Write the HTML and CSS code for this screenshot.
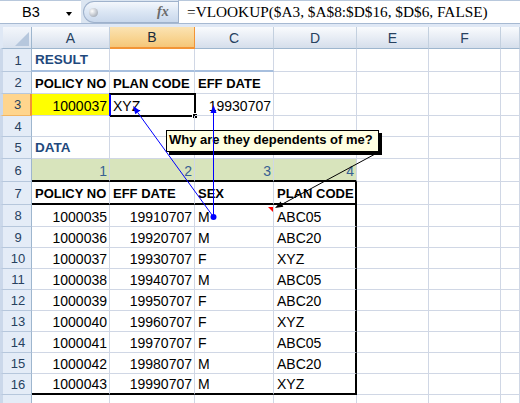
FILE: index.html
```html
<!DOCTYPE html>
<html>
<head>
<meta charset="utf-8">
<link rel="stylesheet" href="styles.css">
</head>
<body>
<div class="app">
  <div class="fbar">
    <div class="namebox"><span class="nb-text">B3</span><span class="dd"></span></div>
    <div class="pill"><span class="knob"></span><span class="fx">fx</span></div>
    <div class="formula">=VLOOKUP($A3, $A$8:$D$16, $D$6, FALSE)</div>
  </div>
  <div class="band"></div>
  <div class="sheet">
    <div class="corner"></div><div class="ch">A</div><div class="ch sel">B</div><div class="ch">C</div><div class="ch">D</div><div class="ch">E</div><div class="ch">F</div><div class="ch"></div>

    <div class="rh">1</div><div class="c h hb">RESULT</div><div class="c hb"></div><div class="c hb"></div><div class="c"></div><div class="c"></div><div class="c"></div><div class="c"></div>

    <div class="rh">2</div><div class="c b">POLICY NO</div><div class="c b">PLAN CODE</div><div class="c b">EFF DATE</div><div class="c"></div><div class="c"></div><div class="c"></div><div class="c"></div>

    <div class="rh sel">3</div><div class="c r y">1000037</div><div class="c active">XYZ<span class="selbox"><span class="handle"></span></span></div><div class="c r">19930707</div><div class="c"></div><div class="c"></div><div class="c"></div><div class="c"></div>

    <div class="rh">4</div><div class="c"></div><div class="c"></div><div class="c"></div><div class="c"></div><div class="c"></div><div class="c"></div><div class="c"></div>

    <div class="rh">5</div><div class="c h">DATA</div><div class="c"></div><div class="c"></div><div class="c"></div><div class="c"></div><div class="c"></div><div class="c"></div>

    <div class="rh">6</div><div class="c r g tb">1</div><div class="c r g tb">2</div><div class="c r g tb">3</div><div class="c r g tb">4</div><div class="c"></div><div class="c"></div><div class="c"></div>

    <div class="rh">7</div><div class="c b tb">POLICY NO</div><div class="c b tb">EFF DATE</div><div class="c b tb">SEX</div><div class="c b tb tr">PLAN CODE</div><div class="c"></div><div class="c"></div><div class="c"></div>

    <div class="rh">8</div><div class="c r">1000035</div><div class="c r">19910707</div><div class="c">M</div><div class="c tr">ABC05</div><div class="c"></div><div class="c"></div><div class="c"></div>
    <div class="rh">9</div><div class="c r">1000036</div><div class="c r">19920707</div><div class="c">M</div><div class="c tr">ABC20</div><div class="c"></div><div class="c"></div><div class="c"></div>
    <div class="rh">10</div><div class="c r">1000037</div><div class="c r">19930707</div><div class="c">F</div><div class="c tr">XYZ</div><div class="c"></div><div class="c"></div><div class="c"></div>
    <div class="rh">11</div><div class="c r">1000038</div><div class="c r">19940707</div><div class="c">M</div><div class="c tr">ABC05</div><div class="c"></div><div class="c"></div><div class="c"></div>
    <div class="rh">12</div><div class="c r">1000039</div><div class="c r">19950707</div><div class="c">F</div><div class="c tr">ABC20</div><div class="c"></div><div class="c"></div><div class="c"></div>
    <div class="rh">13</div><div class="c r">1000040</div><div class="c r">19960707</div><div class="c">F</div><div class="c tr">XYZ</div><div class="c"></div><div class="c"></div><div class="c"></div>
    <div class="rh">14</div><div class="c r">1000041</div><div class="c r">19970707</div><div class="c">F</div><div class="c tr">ABC05</div><div class="c"></div><div class="c"></div><div class="c"></div>
    <div class="rh">15</div><div class="c r">1000042</div><div class="c r">19980707</div><div class="c">M</div><div class="c tr">ABC20</div><div class="c"></div><div class="c"></div><div class="c"></div>
    <div class="rh">16</div><div class="c r tb">1000043</div><div class="c r tb">19990707</div><div class="c tb">M</div><div class="c tb tr">XYZ</div><div class="c"></div><div class="c"></div><div class="c"></div>
    <div class="rh"></div><div class="c"></div><div class="c"></div><div class="c"></div><div class="c"></div><div class="c"></div><div class="c"></div><div class="c"></div>
  </div>

  <div class="comment">Why are they dependents of me?</div>

  <svg class="overlay" width="520" height="403" viewBox="0 0 520 403">
    <polygon points="268,207 273,207 273,212" fill="#ff0000"/>
    <line x1="377" y1="153" x2="281" y2="204.8" stroke="#000" stroke-width="1"/>
    <polygon points="275,208 280.6,201.6 283.4,206.8" fill="#000"/>
    <line x1="213.5" y1="217" x2="137.7" y2="112.5" stroke="#0000ff" stroke-width="1"/>
    <polygon points="133,106 140.1,110.7 135.3,114.3" fill="#0000ff"/>
    <line x1="213.5" y1="217" x2="213.5" y2="112" stroke="#0000ff" stroke-width="1"/>
    <polygon points="213.5,105 210.5,113 216.5,113" fill="#0000ff"/>
    <circle cx="213.5" cy="217" r="3" fill="#0000ff"/>
  </svg>
</div>
</body>
</html>
```

FILE: styles.css
```css
* { box-sizing: border-box; }

body {
  margin: 0;
  width: 520px;
  height: 403px;
  overflow: hidden;
  background: #ffffff;
  font-family: "Liberation Sans", Arial, sans-serif;
}

.app {
  position: relative;
  width: 520px;
  height: 403px;
  overflow: hidden;
  background: #dfe8f5;
}

/* formula bar */
.fbar {
  display: flex;
  height: 24px;
  background: #dbe5f1;
  border-bottom: 1px solid #a6b9d2;
}

.namebox {
  position: relative;
  width: 81px;
  background: #ffffff;
  border-top: 1px solid #b8c8dc;
  display: flex;
  align-items: center;
  padding-left: 22px;
  font-size: 14.5px;
  color: #000;
}

.dd {
  position: absolute;
  left: 66px;
  top: 11px;
  width: 0;
  height: 0;
  border-left: 3.5px solid transparent;
  border-right: 3.5px solid transparent;
  border-top: 4px solid #000;
}

.pill {
  position: relative;
  width: 95px;
  margin-left: 2px;
  margin-top: 1px;
  height: 22px;
  border: 1px solid #9fb2cc;
  border-right: none;
  border-radius: 11px 0 0 11px;
  background: linear-gradient(#f4f7fc, #dbe6f4 50%, #c9d8ec);
}

.knob {
  position: absolute;
  left: 5px;
  top: 6px;
  width: 9px;
  height: 9px;
  border-radius: 50%;
  background: radial-gradient(circle at 35% 35%, #ffffff, #b9bfc8 60%, #8d95a1);
}

.fx {
  position: absolute;
  left: 73px;
  top: 2px;
  font-family: "Liberation Serif", serif;
  font-style: italic;
  font-weight: bold;
  font-size: 14px;
  color: #6b6b6b;
}

.formula {
  flex: 1;
  background: #ffffff;
  border-left: 1px solid #9fb2cc;
  border-top: 1px solid #b8c8dc;
  padding-left: 8px;
  font-family: "Liberation Serif", "Times New Roman", serif;
  font-size: 15.3px;
  line-height: 22px;
  color: #000;
  white-space: nowrap;
}

.band {
  height: 3px;
  background: #dfe8f5;
}

/* sheet */
.sheet {
  display: grid;
  grid-template-columns: 32px 78px 85px 79px 83px 72px 72px 19px;
  grid-template-rows: 22px 23px 22px 22px 21px 22px 23px 23px 22px repeat(8, 21px) 21px;
  background: #ffffff;
}

.corner {
  position: relative;
  background: linear-gradient(#f3f6fb, #d9e2ef);
  border-right: 1px solid #9eb6ce;
  border-bottom: 1px solid #9eb6ce;
  border-left: 3px solid #dfe8f5;
}

.corner::after {
  content: "";
  position: absolute;
  right: 2px;
  bottom: 2px;
  width: 0;
  height: 0;
  border-left: 14px solid transparent;
  border-bottom: 14px solid #b6c7dd;
}

.ch {
  display: flex;
  align-items: center;
  justify-content: center;
  background: linear-gradient(#f9fbfd, #e4eaf3 60%, #d5deeb);
  border-right: 1px solid #c3d0df;
  border-bottom: 1px solid #9eb6ce;
  font-size: 14px;
  color: #27415f;
}

.ch.sel {
  background: linear-gradient(#fbe3b3, #f8d38f 60%, #f5c678);
  border-right: 1px solid #f29436;
  border-bottom: 2px solid #f29436;
  color: #1c2a3a;
}

.rh {
  display: flex;
  align-items: center;
  justify-content: center;
  background: #e4ecf7;
  border-left: 3px solid #cbd8ea;
  border-right: 1px solid #9eb6ce;
  border-bottom: 1px solid #b6c7dc;
  font-size: 13px;
  color: #27415f;
  padding-left: 2px;
}

.rh.sel {
  background: #ffd58d;
  border-right: 2px solid #f29436;
  border-bottom: 1px solid #f2b561;
}

.c {
  position: relative;
  display: flex;
  align-items: flex-end;
  padding: 0 2px 1px 3px;
  border-right: 1px solid #d0d7e5;
  border-bottom: 1px solid #d0d7e5;
  font-size: 14px;
  line-height: 16px;
  color: #000;
  white-space: nowrap;
}

.c.r { justify-content: flex-end; }

.c.b {
  font-weight: bold;
  font-size: 13px;
}

.c.h {
  font-weight: bold;
  font-size: 13.5px;
  color: #1f497d;
  padding-bottom: 2px;
}

.c.hb { border-bottom: 2px solid #a7bfde; }
.c.y { background: #ffff00; }
.c.g { background: #d8e4bc; color: #366092; }
.c.tb { border-bottom: 2px solid #000; }
.c.tr { border-right: 2px solid #000; }

.selbox {
  position: absolute;
  left: -1px;
  top: -1px;
  right: -2px;
  bottom: -2px;
  border: 2px solid #000;
  border-left-color: #0000ff;
}

.handle {
  position: absolute;
  right: -4px;
  bottom: -4px;
  width: 6px;
  height: 6px;
  background: #000;
  border: 1px solid #fff;
}

/* comment */
.comment {
  position: absolute;
  left: 166px;
  top: 130px;
  width: 213px;
  height: 22px;
  background: #ffffe1;
  border: 1px solid #000;
  box-shadow: 3px 3px 0 #000;
  padding-left: 2px;
  font-weight: bold;
  font-size: 13px;
  line-height: 18px;
  white-space: nowrap;
  color: #000;
}

.overlay {
  position: absolute;
  left: 0;
  top: 0;
  pointer-events: none;
}
```
